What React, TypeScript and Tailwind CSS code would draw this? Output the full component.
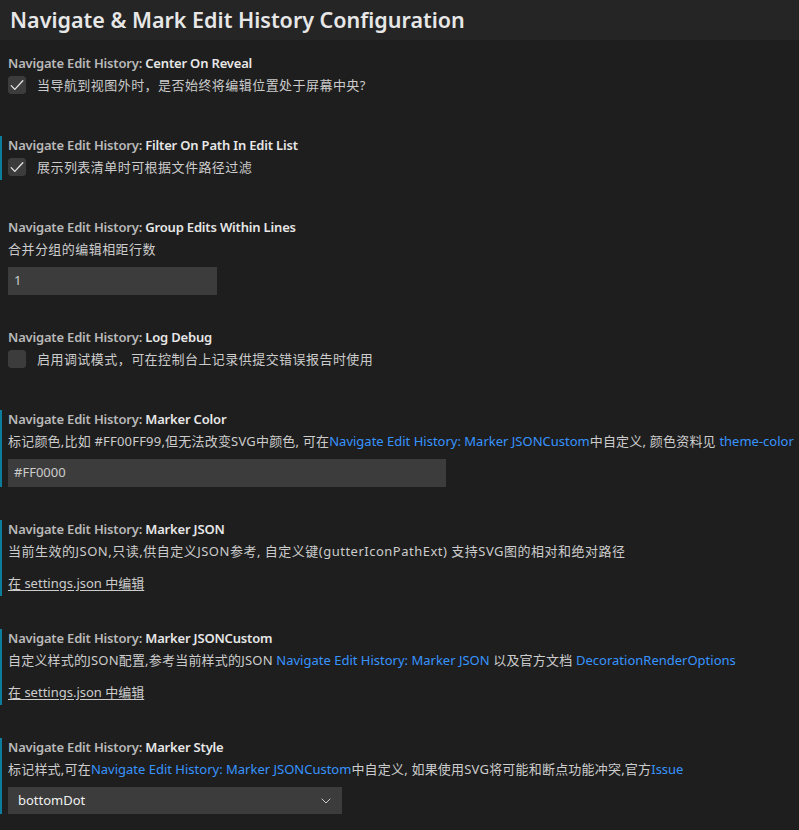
import React from "react";
import { ChevronDown } from "lucide-react";

const font = {
     fontFamily:
          '"Segoe UI", "Noto Sans", "Noto Sans CJK SC", sans-serif',
};

function Title({ name }: { name: string }) {
     return (
          <div className="h-[18px] leading-[18px] text-[13px] font-semibold tracking-[-0.18px] whitespace-nowrap">
               <span className="text-[#b9b9b9]">Navigate Edit History: </span>
               <span className="text-[#e7e7e7]">{name}</span>
          </div>
     );
}

function Link({ children }: { children: React.ReactNode }) {
     return (
          <span className="text-[#3794ff] tracking-normal">{children}</span>
     );
}

function Item({
     modified,
     pb,
     children,
}: {
     modified?: boolean;
     pb: string;
     children: React.ReactNode;
}) {
     return (
          <div className={`pt-[14px] ${pb}`}>
               <div
                    className={`border-l-2 pl-[6px] ${
                         modified ? "border-[#0c7d9d]" : "border-transparent"
                    }`}
               >
                    {children}
               </div>
          </div>
     );
}

function Desc({
     tracking = "tracking-[0.2px]",
     children,
}: {
     tracking?: string;
     children: React.ReactNode;
}) {
     return (
          <div
               className={`mt-[4px] h-[18px] leading-[18px] text-[13px] text-[#cccccc] whitespace-nowrap ${tracking}`}
          >
               {children}
          </div>
     );
}

function CheckRow({ checked, label }: { checked: boolean; label: string }) {
     return (
          <div className="mt-[4px] pb-[4px] flex items-center h-[18px] box-content">
               <div className="w-[18px] h-[18px] rounded-[3px] bg-[#3c3c3c] border border-[#3c3c3c] flex items-center justify-center shrink-0">
                    {checked && (
                         <svg width="16" height="16" viewBox="0 0 16 16">
                              <path
                                   d="M2.2 8.6 L5.8 12.4 L13.8 3.8"
                                   fill="none"
                                   stroke="#e6e6e6"
                                   strokeWidth="1.3"
                                   strokeLinecap="round"
                                   strokeLinejoin="round"
                              />
                         </svg>
                    )}
               </div>
               <span className="ml-[11px] text-[13px] leading-[18px] text-[#cccccc] whitespace-nowrap tracking-[0.45px]">
                    {label}
               </span>
          </div>
     );
}

function TextInput({ value, width }: { value: string; width: string }) {
     return (
          <div
               className={`mt-[9px] mb-[1px] h-[28px] ${width} bg-[#3c3c3c] pl-[6px] flex items-center text-[13px] text-[#cccccc]`}
          >
               {value}
          </div>
     );
}

function EditLink() {
     return (
          <div className="mt-[14px] pb-[4px] h-[18px] box-content leading-[18px] text-[13px] text-[#cccccc]">
               <span className="underline underline-offset-2">
                    在 settings.json 中编辑
               </span>
          </div>
     );
}

export default function App() {
     return (
          <div
               className="w-[799px] h-[830px] bg-[#1e1e1e] overflow-hidden"
               style={font}
          >
               {/* Header */}
               <div className="h-[40px] bg-[#252526] flex items-center pl-[10px]">
                    <h1 className="text-[21.5px] font-semibold text-[#e7e7e7] leading-none whitespace-nowrap">
                         Navigate &amp; Mark Edit History Configuration
                    </h1>
               </div>

               <Item pb="pb-[24px]">
                    <Title name="Center On Reveal" />
                    <CheckRow
                         checked
                         label="当导航到视图外时，是否始终将编辑位置处于屏幕中央?"
                    />
               </Item>

               <Item modified pb="pb-[24px]">
                    <Title name="Filter On Path In Edit List" />
                    <CheckRow checked label="展示列表清单时可根据文件路径过滤" />
               </Item>

               <Item pb="pb-[18px]">
                    <Title name="Group Edits Within Lines" />
                    <Desc tracking="tracking-[0.45px]">合并分组的编辑相距行数</Desc>
                    <TextInput value="1" width="w-[209px]" />
               </Item>

               <Item pb="pb-[24px]">
                    <Title name="Log Debug" />
                    <CheckRow
                         checked={false}
                         label="启用调试模式，可在控制台上记录供提交错误报告时使用"
                    />
               </Item>

               <Item modified pb="pb-[18px]">
                    <Title name="Marker Color" />
                    <Desc>
                         标记颜色,比如 #FF00FF99,但无法改变SVG中颜色, 可在
                         <Link>Navigate Edit History: Marker JSONCustom</Link>
                         中自定义, 颜色资料见 <Link>theme-color</Link>
                    </Desc>
                    <TextInput value="#FF0000" width="w-[438px]" />
               </Item>

               <Item modified pb="pb-[19px]">
                    <Title name="Marker JSON" />
                    <Desc tracking="tracking-[0.5px]">
                         当前生效的JSON,只读,供自定义JSON参考, 自定义键(gutterIconPathExt)
                         支持SVG图的相对和绝对路径
                    </Desc>
                    <EditLink />
               </Item>

               <Item modified pb="pb-[19px]">
                    <Title name="Marker JSONCustom" />
                    <Desc>
                         自定义样式的JSON配置,参考当前样式的JSON{" "}
                         <Link>Navigate Edit History: Marker JSON</Link> 以及官方文档{" "}
                         <Link>DecorationRenderOptions</Link>
                    </Desc>
                    <EditLink />
               </Item>

               <Item modified pb="pb-[18px]">
                    <Title name="Marker Style" />
                    <Desc>
                         标记样式,可在
                         <Link>Navigate Edit History: Marker JSONCustom</Link>
                         中自定义, 如果使用SVG将可能和断点功能冲突,官方
                         <Link>Issue</Link>
                    </Desc>
                    <div className="mt-[9px] mb-[1px] h-[27px] w-[334px] bg-[#3c3c3c] pl-[10px] pr-[8px] flex items-center justify-between text-[13px] text-[#f0f0f0]">
                         <span>bottomDot</span>
                         <ChevronDown
                              size={16}
                              strokeWidth={1.5}
                              className="text-[#cccccc]"
                         />
                    </div>
               </Item>
          </div>
     );
}
